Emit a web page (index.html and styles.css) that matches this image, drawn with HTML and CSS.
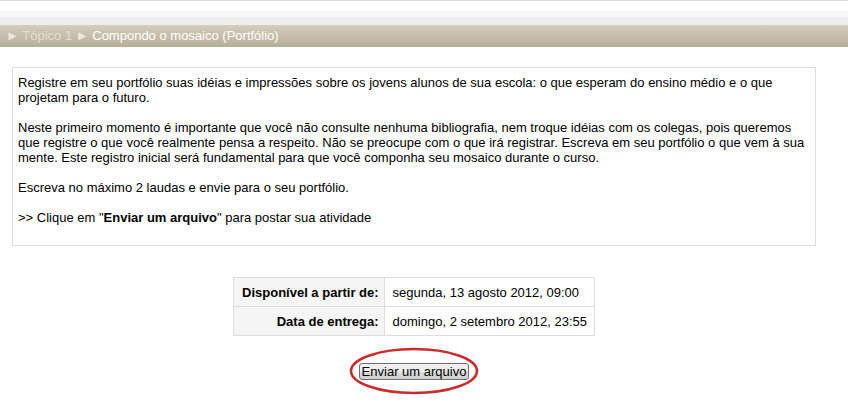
FILE: index.html
```html
<!DOCTYPE html>
<html lang="pt">
<head>
<meta charset="utf-8">
<title>Compondo o mosaico (Portfólio)</title>
<link rel="stylesheet" href="styles.css">
</head>
<body>
<div class="topline"></div>
<div class="subband"></div>
<div class="navbar">
  <span class="crumb-faded"><span class="arrow">&#9658;</span> Tópico 1</span>
  <span class="arrow">&#9658;</span>
  <span class="crumb-current">Compondo o mosaico (Portfólio)</span>
</div>
<main class="content">
  <div class="intro">
    <p>Registre em seu portfólio suas idéias e impressões sobre os jovens alunos de sua escola: o que esperam do ensino médio e o que projetam para o futuro.</p>
    <p>Neste primeiro momento é importante que você não consulte nenhuma bibliografia, nem troque idéias com os colegas, pois queremos que registre o que você realmente pensa a respeito. Não se preocupe com o que irá registrar. Escreva em seu portfólio o que vem à sua mente. Este registro inicial será fundamental para que você componha seu mosaico durante o curso.</p>
    <p>Escreva no máximo 2 laudas e envie para o seu portfólio.</p>
    <p>&gt;&gt; Clique em "<strong>Enviar um arquivo</strong>" para postar sua atividade</p>
  </div>
  <table class="dates">
    <tr>
      <th>Disponível a partir de:</th>
      <td>segunda, 13 agosto 2012, 09:00</td>
    </tr>
    <tr>
      <th>Data de entrega:</th>
      <td>domingo, 2 setembro 2012, 23:55</td>
    </tr>
  </table>
  <div class="actions">
    <div class="btn-wrap">
      <button class="upload" type="button">Enviar um arquivo</button>
      <svg class="highlight" width="130" height="48" viewBox="0 0 130 48" aria-hidden="true">
        <ellipse cx="65" cy="24" rx="63" ry="22" fill="none" stroke="#cc2a2c" stroke-width="2.6"/>
      </svg>
    </div>
  </div>
</main>
</body>
</html>
```

FILE: styles.css
```css
html, body {
  margin: 0;
  padding: 0;
  background: #ffffff;
}
body {
  font-family: Arial, "Liberation Sans", sans-serif;
  font-size: 13px;
  color: #000;
}
.topline {
  height: 1px;
  background: #dcdcdc;
}
.subband {
  margin-top: 10px;
  height: 14px;
  background: linear-gradient(#f6f6f6 0, #f6f6f6 40%, #eeeeee 45%, #eeeeee 100%);
}
.navbar {
  height: 22px;
  line-height: 22px;
  padding-left: 6px;
  background: linear-gradient(#d6cebd 0%, #cbc3b1 30%, #c3bba8 60%, #b5ae95 100%);
  color: #ffffff;
  white-space: nowrap;
}
.navbar .arrow {
  font-size: 13px;
  color: #ece8df;
}
.crumb-faded {
  color: #e4dfd4;
}
.content {
  margin: 20px 32px 0 12px;
}
.intro {
  border: 1px solid #dddddd;
  padding: 7px 5px 5px 5px;
  line-height: 15px;
}
.intro p {
  margin: 0 0 15px 0;
}
.dates {
  margin: 31px auto 0 auto;
  border-collapse: collapse;
}
.dates th, .dates td {
  border: 1px solid #dddddd;
  height: 28px;
  padding: 0 7px 0 8px;
  font-size: 13px;
  white-space: nowrap;
}
.dates th {
  background: #f5f5f5;
  text-align: right;
  font-weight: bold;
  padding-right: 5px;
}
.dates td {
  text-align: left;
}
.actions {
  display: flex;
  justify-content: center;
  margin-top: 27px;
  padding-bottom: 30px;
}
.btn-wrap {
  position: relative;
  display: flex;
}
.upload {
  font-family: Arial, "Liberation Sans", sans-serif;
  font-size: 13px;
  color: #000;
  height: 17px;
  padding: 0 2px;
  border: 1px solid #707070;
  border-radius: 3px;
  background: linear-gradient(#f2f2f2 0%, #ebebeb 50%, #dddddd 51%, #cfcfcf 100%);
  line-height: 14px;
}
.highlight {
  position: absolute;
  left: 50%;
  top: -16px;
  margin-left: -65px;
  overflow: visible;
  pointer-events: none;
}
```
